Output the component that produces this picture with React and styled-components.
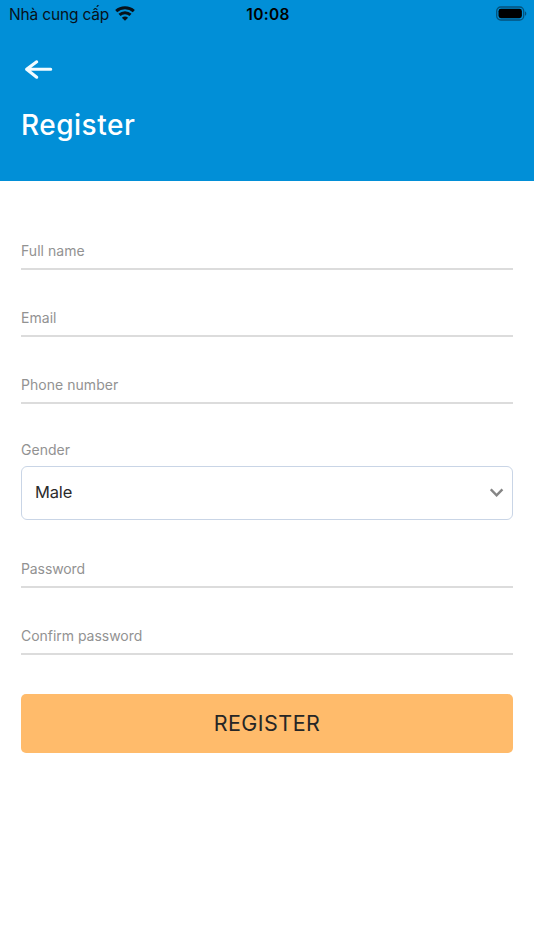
import React from 'react';
import styled, { createGlobalStyle } from 'styled-components';

const GlobalStyle = createGlobalStyle`
	* {
		box-sizing: border-box;
	}
	body {
		margin: 0;
		background-color: #fff;
		font-family: Inter, 'Liberation Sans', sans-serif;
	}
`;

const Screen = styled.div`
	display: flex;
	flex-direction: column;
	height: 950px;
	background-color: #fff;
`;

const Header = styled.header`
	height: 181px;
	background-color: #018fd7;
`;

const StatusBar = styled.div`
	display: grid;
	grid-template-columns: 1fr auto 1fr;
	align-items: center;
	height: 27px;
	padding: 0 7px 0 9px;
	color: #07111a;
`;

const Carrier = styled.div`
	display: flex;
	align-items: center;
	gap: 6px;
	padding-top: 1px;
	font-size: 15.5px;
	letter-spacing: -.17px;
	white-space: nowrap;

	svg {
		margin-bottom: 1px;
	}
`;

const Clock = styled.div`
	padding-top: 1px;
	font-size: 15.5px;
	font-weight: 600;
	letter-spacing: .3px;
	color: #000;
`;

const Battery = styled.svg`
	justify-self: end;
`;

const BackButton = styled.button`
	display: block;
	margin: 32px 0 0 24px;
	padding: 0;
	border: none;
	background: none;
	line-height: 0;
`;

const Title = styled.h1`
	margin: 25px 0 0 21px;
	color: #fff;
	font-size: 28px;
	font-weight: 450;
	line-height: 40px;
	letter-spacing: .5px;
`;

const Form = styled.form`
	display: flex;
	flex-direction: column;
	padding: 20px 21px 0;
`;

const Field = styled.label`
	display: flex;
	flex-direction: column;
	justify-content: flex-end;
	height: ${props => props.$height || 67}px;
	color: #929292;
	font-size: 14px;
	line-height: 20px;
	letter-spacing: ${props => props.$spacing || .04}px;
`;

const Line = styled.span`
	height: 2px;
	margin-top: 7px;
	background-color: #dcdcdc;
`;

const Select = styled.div`
	display: flex;
	align-items: center;
	justify-content: space-between;
	height: 54px;
	margin-top: 6px;
	padding: 0 8px 2px 13px;
	border: 1px solid #c9d5e6;
	border-radius: 6px;
	color: #2b2b2b;
	font-size: 16.5px;
	letter-spacing: -.15px;
`;

const Submit = styled.button`
	height: 59px;
	margin-top: 39px;
	padding: 0 0 2px;
	border: none;
	border-radius: 5px;
	background-color: #ffbb6b;
	color: #262626;
	font-family: inherit;
	font-size: 21.5px;
	font-weight: 430;
	letter-spacing: .45px;
`;

function WifiIcon() {
	return (
		<svg width="20" height="15" viewBox="0 0 20 15" fill="none" stroke="#07111a" strokeWidth="3">
			<path d="M1.2 5.2C6.1.7 13.9.7 18.8 5.2" />
			<path d="M4.5 8.9c3.1-2.9 7.9-2.9 11 0" />
			<path d="M10 14.8 6.9 11.7c1.8-1.5 4.4-1.5 6.2 0z" fill="#07111a" stroke="none" />
		</svg>
	);
}

function BatteryIcon() {
	return (
		<Battery width="32" height="15" viewBox="0 0 32 15">
			<rect x="1.7" y="1" width="27" height="13" rx="4" fill="none" stroke="#04527c" strokeWidth="1.3" />
			<rect x="3.5" y="2.8" width="23.4" height="9.4" rx="2.4" fill="#000" />
			<path d="M30 5.2c1.8.8 1.8 3.8 0 4.6z" fill="#04527c" />
		</Battery>
	);
}

function LineField({ label, ...rest }) {
	return (
		<Field {...rest}>
			{label}
			<Line />
		</Field>
	);
}

function App() {
	return (
		<Screen>
			<GlobalStyle />
			<Header>
				<StatusBar>
					<Carrier>
						Nhà cung cấp
						<WifiIcon />
					</Carrier>
					<Clock>10:08</Clock>
					<BatteryIcon />
				</StatusBar>
				<BackButton type="button" aria-label="Back">
					<svg width="30" height="21" viewBox="0 0 30 21" fill="none" stroke="#f2fbff" strokeWidth="3.1" strokeLinecap="round" strokeLinejoin="round">
						<path d="M26.7 10.3H3.2M12.7 2.8 2.6 10.3l10.1 7.9" />
					</svg>
				</BackButton>
				<Title>Register</Title>
			</Header>
			<Form>
				<LineField label="Full name" $height={69} />
				<LineField label="Email" />
				<LineField label="Phone number" />
				<Field as="div" $height={116}>
					Gender
					<Select>
						Male
						<svg width="14" height="10" viewBox="0 0 14 10" fill="none" stroke="#858585" strokeWidth="2.4">
							<path d="m.8 2.3 5.8 6 5.8-6" />
						</svg>
					</Select>
				</Field>
				<LineField label="Password" $height={68} $spacing={-.1} />
				<LineField label="Confirm password" $spacing={-.03} />
				<Submit type="button">REGISTER</Submit>
			</Form>
		</Screen>
	);
}

export default App;
